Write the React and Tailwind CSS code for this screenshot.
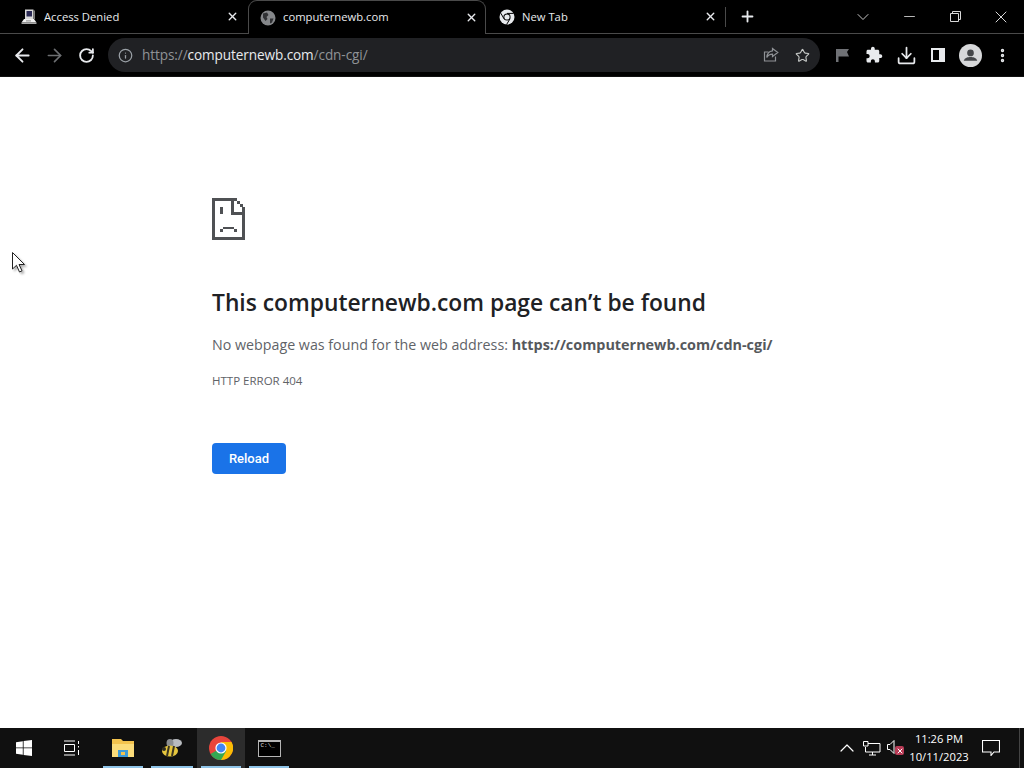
import { ArrowLeft, ArrowRight, RotateCw, Info, Star, Download, X, Plus, ChevronDown, Minus, ChevronUp, EllipsisVertical } from 'lucide-react'

const UI_FONT = 'font-["Open_Sans","Noto_Sans",sans-serif]'

function ComputerIcon() {
  return (
    <svg width="16" height="16" viewBox="0 0 16 16" className="shrink-0">
      <path d="M4 .5h8.500v9.500H4z" fill="#d8d8d8" />
      <path d="M5.500 2h5.500v5.500H5.500z" fill="#2b2a55" />
      <path d="M12.500 1.500h1.500v8.500h-1.500z" fill="#7d7d7d" />
      <path d="M3 10h10l2.500 3.500H.5z" fill="#f0f0f0" />
      <path d="M.5 13.500h15V15H.5z" fill="#a8a8a8" />
      <path d="M5 11.500h5v.8H5z" fill="#777" />
    </svg>
  )
}

function GlobeIcon() {
  return (
    <svg width="16" height="16" viewBox="0 0 16 16" className="shrink-0">
      <circle cx="8" cy="8" r="7.500" fill="#85878a" />
      <path d="M3 3.500 7 2.500 8.500 5 6.500 7 7.500 9 5.500 11 3 7.500z M10 8.500h3.500L12 12.500 10 13.500z" fill="#303134" />
    </svg>
  )
}

function ChromeMono() {
  return (
    <svg width="16" height="16" viewBox="0 0 16 16" className="shrink-0">
      <circle cx="8" cy="8" r="7.500" fill="#e8eaed" />
      <circle cx="8" cy="8" r="3.600" fill="#000" />
      <circle cx="8" cy="8" r="2.600" fill="#e8eaed" />
      <path d="M8 4.400h6.600M5 9.800 1.800 4.200M11 9.800l-3.400 5.700" stroke="#000" strokeWidth="1" />
    </svg>
  )
}

function Tab({ icon, title, active, className }) {
  return (
    <div className={`relative flex items-center gap-[7px] ${active ? 'w-[238px] h-[34px] -mb-px ml-px pl-[11px] pr-[7px] bg-black border border-b-0 border-[#4a4a4a] rounded-t-[9px] z-10' : 'w-[239px] h-[33px] pl-[13px] pr-[8px]'} ${className ?? ''}`}>
      {icon}
      <span className={`flex-1 text-[11.250px] text-[#e8eaed] truncate ${active ? '' : 'pt-[1px]'}`}>{title}</span>
      <X size={13} strokeWidth={2.6} className="text-[#e8eaed]" />
    </div>
  )
}

function ShareIcon() {
  return (
    <svg width="16" height="16" viewBox="0 0 16 16" fill="none" stroke="#8f9296" strokeWidth="1.200">
      <path d="M12.500 9.500v4.500H1.500V5h4" />
      <path d="M9.500 1.500 14.800 5.500 9.500 9.500V7.200C7 7.200 5 8.200 3.800 10.500 4 7 6 4.200 9.500 3.800z" />
    </svg>
  )
}

function NavButton({ children }) {
  return <div className="w-[32px] flex items-center justify-center shrink-0">{children}</div>
}

function Toolbar() {
  return (
    <div className="h-[43px] bg-black flex items-center border-b border-[#111]">
      <div className="w-[108px] flex items-center pl-[6px] shrink-0">
        <NavButton><ArrowLeft size={21} strokeWidth={2.2} className="text-[#e8eaed]" /></NavButton>
        <NavButton><ArrowRight size={21} strokeWidth={1.9} className="text-[#6d6f72]" /></NavButton>
        <NavButton><RotateCw size={17} strokeWidth={2.6} className="text-[#e8eaed]" /></NavButton>
      </div>
      <div className="w-[712px] h-[34px] bg-[#202124] rounded-full flex items-center pl-[10px] pr-[10px] shrink-0">
        <Info size={15} className="text-[#9aa0a6]" />
        <div className="ml-[9px] flex-1 text-[13.600px] text-[#8f9296] tracking-[-0.1px]">
          https://<span className="text-[#e8eaed]">computernewb.com</span>/cdn-cgi/
        </div>
        <div className="-ml-[1px]"><ShareIcon /></div>
        <Star size={15} strokeWidth={1.8} className="text-[#c4c7c5] ml-[16px]" />
      </div>
      <div className="flex items-center pl-[6px]">
        <NavButton>
          <svg width="13" height="13" viewBox="0 0 13 13"><path d="M0 0h13l-2 3 2 4.500H2.500V13H0z" fill="#6f7175" /></svg>
        </NavButton>
        <NavButton>
          <svg width="18" height="18" viewBox="0 0 24 24" fill="#e8eaed">
            <path d="M20.500 11H19V7c0-1.100-.9-2-2-2h-4V3.500C13 2.120 11.880 1 10.500 1S8 2.120 8 3.500V5H4c-1.100 0-1.990.9-1.990 2v3.800H3.500c1.490 0 2.700 1.210 2.700 2.700s-1.210 2.700-2.700 2.700H2V20c0 1.100.9 2 2 2h3.800v-1.500c0-1.490 1.210-2.700 2.700-2.700 1.490 0 2.700 1.210 2.700 2.700V22H17c1.100 0 2-.9 2-2v-4h1.500c1.380 0 2.500-1.120 2.500-2.500S21.880 11 20.500 11z" />
          </svg>
        </NavButton>
        <NavButton><Download size={21} strokeWidth={2} className="text-[#e8eaed]" /></NavButton>
        <NavButton>
          <div className="w-[14px] h-[14px] border-[2px] border-[#e8eaed] flex justify-end"><div className="w-[4px] bg-[#e8eaed]" /></div>
        </NavButton>
        <NavButton>
          <svg width="23" height="23" viewBox="0 0 22 22">
            <circle cx="11" cy="11" r="11" fill="#d7d8da" />
            <circle cx="11" cy="8.500" r="3.200" fill="#45474a" />
            <path d="M4.500 16c1-3 4-3.600 6.500-3.600s5.500.6 6.500 3.600z" fill="#45474a" />
          </svg>
        </NavButton>
        <NavButton><EllipsisVertical size={17} strokeWidth={2.8} className="text-[#e8eaed]" /></NavButton>
      </div>
    </div>
  )
}

function SadPage() {
  return (
    <svg width="33" height="42" viewBox="0 0 34 43" shapeRendering="crispEdges" fill="#4f5154">
      <path d="M0 0h26v3H3v37h28V14h3v29H0z" />
      <path d="M20 0h3v14h11v3H20z" />
      <path d="M26 3h3v3h-3zM29 6h3v3h-3zM31 9h3v5h-3z" />
      <path d="M8 9h3v7H8zM11 30h12v2H11zM8 32h3v3H8zM23 32h3v3h-3z" />
    </svg>
  )
}

function WinLogo() {
  return (
    <svg width="16" height="16" viewBox="0 0 16 16" fill="#fff">
      <path d="M0 2.200 6.800 1.200V7.500H0zM7.600 1.100 16 0V7.500H7.600zM0 8.300h6.800v6.400L0 13.800zM7.600 8.300H16V16L7.600 14.900z" />
    </svg>
  )
}

function TaskItem({ children, active, className }) {
  return (
    <div className={`relative h-full flex items-center justify-center ${active ? 'bg-[#2c2c2c]' : ''} ${className ?? 'w-[48px]'}`}>
      {children}
      <div className="absolute left-[4px] right-[4px] bottom-0 h-[2px] bg-[#8fc4e8]" />
    </div>
  )
}

function Taskbar() {
  return (
    <div className="h-[40px] bg-[#101010] flex items-center text-white">
      <div className="w-[48px] h-full flex items-center justify-center"><WinLogo /></div>
      <div className="w-[51px] h-full flex items-center pl-[15px]">
        <svg width="18" height="16" viewBox="0 0 18 16" fill="none" stroke="#fff" strokeWidth="1">
          <path d="M1 1h11M1 15h11M1.500 4.500h10v7h-10zM15.500 1v3M15.500 6v1.500M15.500 10v5" />
        </svg>
      </div>
      <TaskItem>
        <svg width="24" height="22" viewBox="0 0 24 22">
          <path d="M1 2h9l2 2h11v16H1z" fill="#f3c34e" />
          <path d="M1 7h22v13H1z" fill="#fbdc7a" />
          <path d="M7 13h10v7H7z" fill="#3d9ad6" />
          <path d="M10 15h4v3h-4z" fill="#f3c34e" />
        </svg>
      </TaskItem>
      <TaskItem className="w-[50px]">
        <svg width="24" height="20" viewBox="0 0 22 20">
          <ellipse cx="15" cy="5" rx="6" ry="4" fill="#b9bcc0" />
          <ellipse cx="9" cy="5" rx="3.500" ry="4" fill="#8b8e91" />
          <ellipse cx="9" cy="13" rx="8" ry="5.500" fill="#e6c63e" />
          <path d="M8 8l-2 10M13 8l-2 10" stroke="#3a3520" strokeWidth="2" />
          <circle cx="3" cy="11" r="2" fill="#2c2a20" />
        </svg>
      </TaskItem>
      <TaskItem active>
        <svg width="24" height="24" viewBox="0 0 24 24">
          <circle cx="12" cy="12" r="12" fill="#e8453c" />
          <path d="M12 12 1.600 18A12 12 0 0 0 12 24c1 0 2-.1 3-.4L21 12z" fill="#34a853" />
          <path d="M12 6h10.500A12 12 0 0 1 12 24l5.200-9z" fill="#fbbc05" />
          <circle cx="12" cy="12" r="5.600" fill="#fff" />
          <circle cx="12" cy="12" r="4.400" fill="#4285f4" />
        </svg>
      </TaskItem>
      <TaskItem>
        <div className="w-[23px] h-[17px] bg-black border border-[#b5b5b5] border-t-[2px] pl-[2px] text-[6px] leading-[7px] font-['Liberation_Mono',monospace] text-[#ddd]">C:\_</div>
      </TaskItem>
      <div className="flex-1" />
      <ChevronUp size={24} strokeWidth={1.2} className="mr-[4px]" />
      <svg width="18" height="15" viewBox="0 0 18 15" fill="none" stroke="#fff" strokeWidth="1" className="mr-[6px]">
        <path d="M5 2.500H17V11H2.500V6M9.500 11v3M6 14h7M.5 .5h4.500v4.500H.5z" />
      </svg>
      <div className="relative w-[20px] h-[16px] mr-[2px]">
        <svg width="9" height="14" viewBox="0 0 9 14" fill="none" stroke="#fff" strokeWidth="1">
          <path d="M.5 4.500h2.500l4-4v13l-4-4H.5z" />
        </svg>
        <div className="absolute left-[8px] top-[6px] w-[9px] h-[9px] rounded-[2px] bg-[#b83a55] flex items-center justify-center">
          <X size={8} strokeWidth={3} />
        </div>
      </div>
      <div className="w-[60px] flex flex-col items-center text-[11.200px] leading-[18px] text-white">
        <span>11:26 PM</span>
        <span>10/11/2023</span>
      </div>
      <div className="w-[44px] flex justify-center">
        <svg width="18" height="16" viewBox="0 0 18 16" fill="none" stroke="#fff" strokeWidth="1.100">
          <path d="M.5 .5h17v11.500h-5.500l-3 3.500v-3.500H.5z" />
        </svg>
      </div>
      <div className="w-[11px] h-full pl-[6px]"><div className="w-px h-full bg-[#444]" /></div>
    </div>
  )
}

export default function App() {
  return (
    <div className={`relative w-[1024px] h-[768px] overflow-hidden bg-white flex flex-col ${UI_FONT}`}>
      {/* tab strip */}
      <div className="relative h-[34px] bg-black flex items-end pl-[8px] border-b border-[#4a4a4a]">
        <Tab icon={<ComputerIcon />} title="Access Denied" />
        <Tab icon={<GlobeIcon />} title="computernewb.com" active />
        <Tab icon={<ChromeMono />} title="New Tab" />
        <div className="w-px h-[20px] bg-[#4a4a4a] self-center" />
        <Plus size={17} strokeWidth={2.6} className="text-[#e8eaed] self-center ml-[13px]" />
        <div className="flex-1" />
        <div className="flex items-center h-full text-[#d8d8d8] self-start">
          <div className="w-[46px] flex justify-center h-[28px] items-center"><ChevronDown size={20} strokeWidth={1.1} /></div>
          <div className="w-[46px] flex justify-center h-[28px] items-center"><Minus size={17} strokeWidth={1.2} /></div>
          <div className="w-[46px] flex justify-center h-[28px] items-center">
            <svg width="11" height="11" viewBox="0 0 11 11" fill="none" stroke="currentColor"><path d="M.5 2.500h8v8h-8zM2.500 2.500v-2h8v8h-2" /></svg>
          </div>
          <div className="w-[46px] flex justify-center h-[28px] items-center"><X size={20} strokeWidth={1.2} /></div>
        </div>
      </div>
      <Toolbar />
      {/* error page */}
      <div className="flex-1 pl-[212px] pt-[121px]">
        <SadPage />
        <h1 className="mt-[46px] text-[22.800px] leading-[34px] font-semibold text-[#202124] whitespace-nowrap">This computernewb.com page can’t be found</h1>
        <p className="mt-[13px] text-[14.250px] leading-[24px] text-[#5f6368] whitespace-nowrap">
          No webpage was found for the web address: <strong className="text-[14.400px] font-bold text-[#55585c]">https://computernewb.com/cdn-cgi/</strong>
        </p>
        <p className="mt-[16px] text-[11.500px] leading-[16px] text-[#5f6368]">HTTP ERROR 404</p>
        <button className="mt-[54px] block w-[74px] h-[31px] rounded-[4px] bg-[#1a73e8] text-white text-[13px] font-medium font-['Roboto',sans-serif]">Reload</button>
      </div>
      <Taskbar />
      {/* mouse cursor, part of the capture */}
      <svg width="14" height="21" viewBox="0 0 14 21" className="absolute left-[12px] top-[252px] drop-shadow-[2px_2px_1px_rgba(0,0,0,0.3)]">
        <path d="M.5 .5V17L4.500 13.300 7.500 20l2.500-1.200-3-6.300h5.500z" fill="#fff" stroke="#222" strokeWidth="1" />
      </svg>
    </div>
  )
}
